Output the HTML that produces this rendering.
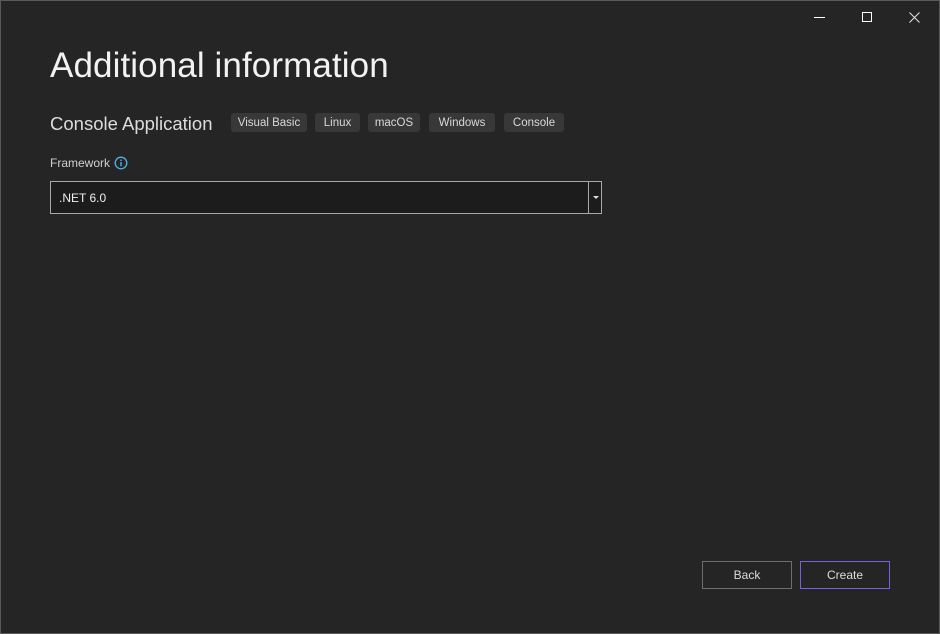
<!DOCTYPE html>
<html><head><style>
html,body{margin:0;padding:0}
body{width:940px;height:634px;background:#252525;position:relative;overflow:hidden;font-family:"Liberation Sans",sans-serif;color:#e6e6e6}
.frame{position:absolute;left:0;top:0;width:938px;height:632px;border:1px solid #5a5a5a}
.a{position:absolute}
h1{position:absolute;left:50px;top:46px;margin:0;font-weight:normal;font-size:35px;color:#f2f2f2;letter-spacing:0.1px}
.sub{left:50px;top:113px;font-size:18.5px;color:#dcdcdc}
.tag{position:absolute;top:113px;height:19px;background:#383838;border-radius:3px;font-size:11.5px;color:#d8d8d8;line-height:20px;text-align:center}
.lbl{left:50px;top:156px;font-size:12px;color:#d0d0d0}
.dd{left:50px;top:181px;width:550px;height:31px;border:1px solid #a8a8a8;background:#1c1c1c}
.btn{position:absolute;top:561px;width:88px;height:26px;border:1px solid #6e6e6e;font-size:12px;line-height:26px;text-align:center;color:#dcdcdc}
</style></head><body>
<div class="frame"></div>
<div class="a" style="left:814px;top:17px;width:11px;height:1px;background:#fff"></div>
<div class="a" style="left:862px;top:12px;width:8px;height:8px;border:1px solid #fff"></div>
<svg class="a" style="left:909px;top:12px" width="11" height="11"><path d="M0.5 0.5L10.5 10.5M10.5 0.5L0.5 10.5" stroke="#ddd" stroke-width="1.1"/></svg>
<h1>Additional information</h1>
<div class="a sub">Console Application</div>
<div class="tag" style="left:231px;width:76px">Visual Basic</div>
<div class="tag" style="left:315px;width:45px">Linux</div>
<div class="tag" style="left:368px;width:52px">macOS</div>
<div class="tag" style="left:429px;width:66px">Windows</div>
<div class="tag" style="left:504px;width:60px">Console</div>
<div class="a lbl">Framework</div>
<svg class="a" style="left:114px;top:156px" width="14" height="14"><circle cx="7" cy="7" r="5.8" fill="none" stroke="#4fb3e8" stroke-width="1.3"/><rect x="6.3" y="6" width="1.4" height="4.2" fill="#4fb3e8"/><rect x="6.3" y="3.6" width="1.4" height="1.4" fill="#4fb3e8"/></svg>
<div class="a dd">
<div class="a" style="left:8px;top:9px;font-size:12px;color:#f0f0f0">.NET 6.0</div>
<div class="a" style="left:537px;top:0;width:1px;height:31px;background:#a8a8a8"></div>
<div class="a" style="left:542px;top:14px;width:0;height:0;border-left:3px solid transparent;border-right:3px solid transparent;border-top:3px solid #ddd"></div>
</div>
<div class="btn" style="left:702px">Back</div>
<div class="btn" style="left:800px;border-color:#7462e0">Create</div>
</body></html>
